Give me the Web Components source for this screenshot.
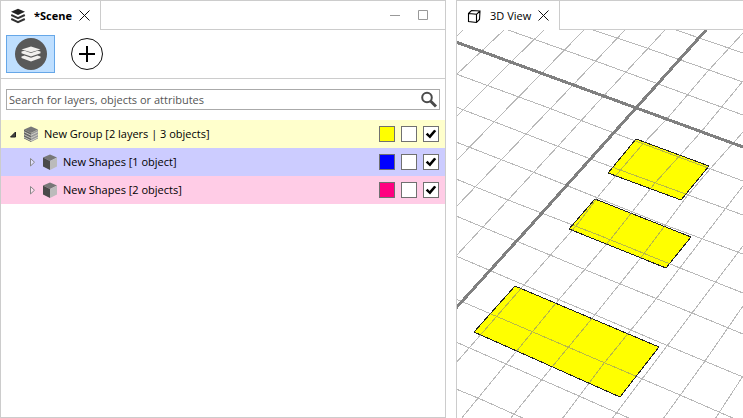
<!DOCTYPE html>
<html lang="en">
<head>
<meta charset="utf-8">
<title>Scene</title>
<style>
html, body { height: 100%; margin: 0; }
body { font: 11px/16px "Open Sans", "Noto Sans", sans-serif; color: #000; background: #fff; overflow: hidden; }
</style>
</head>
<body>
<app-workbench>
  <view-panel slot="side" label="*Scene" active controls>
    <svg slot="icon" width="16" height="16" viewBox="0 0 16 16"><path d="M7 .8 14 3.800 7 7 0 3.800z" fill="#222"/><path d="M.2 7 7 10.200l6.800-3.200M.2 11 7 14.200 13.800 11" fill="none" stroke="#333" stroke-width="2"/></svg>
    <scene-toolbar></scene-toolbar>
    <search-box></search-box>
    <scene-tree>
      <layer-row label="New Group [2 layers | 3 objects]" kind="group" open tint="#ffffcc" swatch="#ffff00"></layer-row>
      <layer-row label="New Shapes [1 object]" kind="shape" level="1" tint="#ccccff" swatch="#0000ff"></layer-row>
      <layer-row label="New Shapes [2 objects]" kind="shape" level="1" tint="#ffcce6" swatch="#ff0080"></layer-row>
    </scene-tree>
  </view-panel>
  <view-panel slot="main" label="3D View" bleed>
    <svg slot="icon" width="16" height="16" viewBox="0 0 16 16" fill="none" stroke="#000" stroke-width="1.100"><path d="M1.500 5.500 4.500 2.500l8.500.5-.5 8.500L9.500 14.500l-8-1zM1.500 5.500l8 .8v8.200M9.500 6.300L13 3"/></svg>
    <grid-view></grid-view>
  </view-panel>
</app-workbench>
<script>
const define = (name, html, setup) => {
  const tpl = document.createElement('template');
  tpl.innerHTML = html;
  customElements.define(name, class extends HTMLElement {
    connectedCallback() {
      if (this.shadowRoot) return;
      const root = this.attachShadow({ mode: 'open' });
      root.append(tpl.content.cloneNode(true));
      if (setup) setup(this, root);
    }
  });
};

define('app-workbench', `
<style>
:host { display: grid; grid-template-columns: 446fr 287fr; column-gap: 10px; height: 100vh; }
::slotted(*) { min-width: 0; }
</style>
<slot name="side"></slot><slot name="main"></slot>`);

define('view-panel', `
<style>
:host { display: flex; flex-direction: column; border: 1px solid #ccc; box-sizing: border-box; overflow: hidden; min-height: 0; }
:host([bleed]) { border-right: 0; border-bottom: 0; }
header { display: flex; height: 29px; flex: none; }
.tab { display: flex; align-items: center; gap: 7px; padding: 0 10px; border-right: 1px solid #ccc; }
.title { white-space: nowrap; }
:host([active]) .title { font-weight: 700; }
.rest { flex: 1; display: flex; align-items: center; justify-content: flex-end; gap: 16px; padding-right: 16px; border-bottom: 1px solid #ccc; }
button { display: block; border: 0; padding: 0; background: none; }
svg, ::slotted(svg) { display: block; }
:host(:not([controls])) .rest button { display: none; }
.body { flex: 1; min-height: 0; display: flex; flex-direction: column; }
</style>
<header>
  <div class="tab"><slot name="icon"></slot><span class="title"></span>
    <button aria-label="Close"><svg width="11" height="11" viewBox="0 0 11 11"><path d="M.5.5l10 10M10.500.5l-10 10" stroke="#111"/></svg></button></div>
  <div class="rest">
    <button aria-label="Minimize"><svg width="12" height="10" viewBox="0 0 12 10"><path d="M1 5.500h10" stroke="#999"/></svg></button>
    <button aria-label="Maximize"><svg width="12" height="10" viewBox="0 0 12 10"><path d="M1.500.5h9v9h-9z" fill="none" stroke="#999"/></svg></button>
  </div>
</header>
<div class="body"><slot></slot></div>`,
(host, root) => { root.querySelector('.title').textContent = host.getAttribute('label'); });

define('scene-toolbar', `
<style>
:host { display: flex; align-items: center; gap: 7px; height: 48px; flex: none; padding: 0 5px; border-bottom: 1px solid #ccc; }
button { width: 49px; height: 38px; padding: 0; display: grid; place-items: center; border: 1px solid transparent; background: none; }
button[aria-pressed] { background: #bfdfff; border-color: #66a7e8; }
</style>
<button aria-pressed="true" aria-label="Layers"><svg width="32" height="32" viewBox="0 0 32 32"><circle cx="16" cy="16" r="16" fill="#595959"/><g fill="#f2f0ee"><path d="M16 8.500l9.500 2.900-9.500 2.900-9.500-2.900z"/><path d="M6.500 13.600l3-.8 6.500 2.200 6.500-2.200 3 .8v1.600l-9.500 3.300-9.500-3.300z"/><path d="M6.500 18.400l3-.8 6.500 2.200 6.500-2.200 3 .8v1.600l-9.500 3.500-9.500-3.500z"/></g></svg></button>
<button aria-label="Add layer"><svg width="32" height="32" viewBox="0 0 32 32"><circle cx="16" cy="16" r="15.500" fill="#fff" stroke="#111"/><path d="M16 8v16M8 16h16" stroke="#000" stroke-width="2"/></svg></button>`);

define('search-box', `
<style>
:host { display: block; flex: none; padding: 10px 5px; }
label { display: flex; align-items: center; height: 19px; border: 1px solid #aaa; padding: 0 1px 0 2px; }
input { flex: 1; min-width: 0; border: 0; outline: 0; padding: 0; font: inherit; color: #000; background: none; }
input::placeholder { color: #555; opacity: 1; }
svg { display: block; }
</style>
<label><input type="text" aria-label="Search" placeholder="Search for layers, objects or attributes">
<svg width="18" height="18" viewBox="0 0 18 18" fill="none" stroke="#4a4a4a"><circle cx="7" cy="6.500" r="4.800" stroke-width="2"/><path d="M10.500 10l5.500 5.500" stroke-width="3"/></svg></label>`);

define('scene-tree', `<style>:host { display: block; }</style><slot></slot>`);

const kinds = {
  group: '<path d="M8 .5l7 3L8 7 1 3.500z" fill="#777"/><path d="M1 3.500L8 7v9l-7-3.500z" fill="#666"/><path d="M8 7l7-3.500v9L8 16z" fill="#999"/><path d="M1 5.800L8 9.300l7-3.500M1 8.600L8 12.100l7-3.500M1 11.200L8 14.700l7-3.500" fill="none" stroke="#deded0" stroke-width=".8"/>',
  shape: '<path d="M8 .5l7 3L8 7 1 3.500z" fill="#777"/><path d="M1 3.500L8 7v9l-7-3.500z" fill="#4a4a4a"/><path d="M8 7l7-3.500v9L8 16z" fill="#bbb"/>'
};
define('layer-row', `
<style>
:host { display: flex; align-items: center; height: 28px; padding: 0 6px 0 7px; background: var(--tint); }
:host([level="1"]) { padding-left: 26px; }
svg { display: block; }
.twist { border: 0; background: none; padding: 0; margin-right: 5px; }
.name { flex: 1; margin-left: 5px; white-space: nowrap; }
.marks { display: flex; gap: 6px; }
.marks > * { box-sizing: border-box; width: 16px; height: 16px; margin: 0; padding: 0; border: 1px solid #707070; background: #fff; border-radius: 0; }
.marks .swatch { background: var(--swatch); }
input { appearance: none; display: grid; place-items: center; }
input:checked::before { content: ""; width: 12px; height: 12px; background: #000; clip-path: polygon(6% 54%, 22% 40%, 38% 58%, 76% 14%, 94% 24%, 42% 88%); }
</style>
<button class="twist" aria-label="Toggle"></button>
<span class="kind"></span>
<span class="name"></span>
<span class="marks"><button class="swatch" aria-label="Colour"></button><input type="checkbox" aria-label="Lock"><input type="checkbox" aria-label="Visible" checked></span>`,
(host, root) => {
  const get = n => host.getAttribute(n);
  host.style.setProperty('--tint', get('tint'));
  host.style.setProperty('--swatch', get('swatch'));
  root.querySelector('.name').textContent = get('label');
  root.querySelector('.twist').innerHTML = host.hasAttribute('open')
    ? '<svg width="10" height="10" viewBox="0 0 10 10"><path d="M7.500 3v5H2.500z" fill="#444" stroke="#222"/></svg>'
    : '<svg width="10" height="10" viewBox="0 0 10 10"><path d="M3.500 1.500v7.500L7.500 5.200z" fill="#fff" fill-opacity=".4" stroke="#888"/></svg>';
  root.querySelector('.kind').innerHTML = '<svg width="16" height="16" viewBox="0 0 16 16">' + kinds[get('kind')] + '</svg>';
});

define('grid-view', `
<style>
:host { display: block; flex: 1; min-height: 0; }
svg { display: block; width: 100%; height: 100%; }
</style>
<svg role="img" aria-label="Ground grid with three shapes" fill="none" shape-rendering="crispEdges"><g transform="translate(-457 -30)">
<g fill="#ff0" stroke="#222" stroke-width="1">
<path d="M636 139L709 166 681 200 608 173z"/><path d="M595 199L691 237 666 268 569 229z"/><path d="M515 286L659 347 620 397 474 332z"/></g>
<path stroke="#808080" stroke-opacity=".55" d="M676 30L743 53
M590 29L641 46 743 82M508 30L601 63 743 115M456 74L549 108 598 127 743 181M456 107L526 134 601 163 743 215M456 142L533 172 598 198 665 225 743 254M456 179L508 200 601 236 680 268 743 293M456 216L550 255 598 275 692 313 743 334M456 256L524 285 598 316 666 345 743 377M456 299L533 332 598 360 680 395 735 419M456 342L506 364 579 396 631 419M456 389L478 398 525 419
M463 30L456 37M504 30L456 75M544 30L511 62 456 117M584 30L542 73 494 122 456 161M625 30L573 85 526 134 456 207M665 30L598 102 559 145 508 200 456 256M743 33L708 71 666 120 641 146 601 193 576 226 524 285 456 363M743 81L701 132 655 183 610 240 556 303 506 364 461 419M743 132L710 169 688 195 643 255 594 316 543 378 510 419M743 186L702 239 656 299 605 362 562 419M743 246L692 313 642 379 612 419M743 306L705 361 663 419M743 376L715 419"/>
<path stroke="#808080" stroke-width="3" d="M456 42L743 147M706 30L636 108 533 223 456 308"/>
</g></svg>`);
</script>
</body>
</html>
